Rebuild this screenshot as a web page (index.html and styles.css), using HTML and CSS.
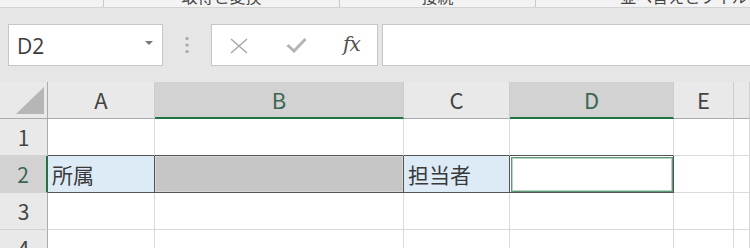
FILE: index.html
```html
<!DOCTYPE html>
<html lang="ja">
<head>
<meta charset="utf-8">
<link rel="stylesheet" href="styles.css">
</head>
<body>
<div class="ribbon">
  <div class="grp g0"></div>
  <div class="grp g1"><span class="glabel">取得と変換</span></div>
  <div class="grp g2"><span class="glabel">接続</span></div>
  <div class="grp g3"><span class="glabel">並べ替えとフィルター</span></div>
</div>
<div class="fbar">
  <div class="namebox"><span class="nb-text">D2</span><span class="nb-arrow"></span></div>
  <div class="grip">
    <svg width="6" height="18" viewBox="0 0 6 18"><circle cx="3" cy="2.5" r="1.6" fill="#a4a4a4"/><circle cx="3" cy="9" r="1.6" fill="#a4a4a4"/><circle cx="3" cy="15.5" r="1.6" fill="#a4a4a4"/></svg>
  </div>
  <div class="btnbox">
    <svg class="ic-x" width="20" height="16" viewBox="0 0 20 16"><path d="M2 1 L18 15 M18 1 L2 15" stroke="#a9a9a9" stroke-width="1.6" fill="none"/></svg>
    <svg class="ic-ok" width="21" height="16" viewBox="0 0 21 16"><path d="M1.5 8 L8 14 L19.5 2" stroke="#b5b5b5" stroke-width="3" fill="none"/></svg>
    <span class="fx">fx</span>
  </div>
  <div class="finput"></div>
</div>
<div class="sheet">
  <div class="h corner"><svg width="48" height="37" viewBox="0 0 48 37"><polygon points="44,5 44,32 16,32" fill="#b6b6b6"/></svg></div>
  <div class="h">A</div>
  <div class="h sel">B</div>
  <div class="h">C</div>
  <div class="h sel">D</div>
  <div class="h">E</div>
  <div class="h last"></div>

  <div class="rh">1</div>
  <div class="c top2"></div>
  <div class="c top2"></div>
  <div class="c top2"></div>
  <div class="c top2"></div>
  <div class="c"></div>
  <div class="c"></div>

  <div class="rh sel">2</div>
  <div class="c r2 blue">所属</div>
  <div class="c r2 gray"></div>
  <div class="c r2 blue">担当者</div>
  <div class="c r2 active"><div class="cursor"></div></div>
  <div class="c"></div>
  <div class="c"></div>

  <div class="rh">3</div>
  <div class="c"></div>
  <div class="c"></div>
  <div class="c"></div>
  <div class="c"></div>
  <div class="c"></div>
  <div class="c"></div>

  <div class="rh">4</div>
  <div class="c"></div>
  <div class="c"></div>
  <div class="c"></div>
  <div class="c"></div>
  <div class="c"></div>
  <div class="c"></div>
</div>
</body>
</html>
```
FILE: styles.css
```css
html, body {
  margin: 0;
  padding: 0;
}
body {
  width: 750px;
  height: 248px;
  overflow: hidden;
  background: #e6e6e6;
  font-family: "Noto Sans CJK JP", "Noto Sans", sans-serif;
}
.ribbon {
  display: flex;
  height: 8px;
  box-sizing: border-box;
  background: #f3f3f3;
  border-bottom: 1px solid #d4d4d4;
  overflow: hidden;
}
.grp {
  flex: none;
  box-sizing: border-box;
  border-right: 1px solid #c9c9c9;
  display: flex;
  justify-content: center;
  white-space: nowrap;
}
.g0 { width: 104px; }
.g1 { width: 236px; }
.g2 { width: 196px; }
.g3 { width: 328px; border-right: none; }
.glabel {
  font-size: 16px;
  line-height: 16px;
  margin-top: -12px;
  color: #444;
}
.fbar {
  display: flex;
  align-items: flex-start;
  height: 74px;
  box-sizing: border-box;
  padding: 16px 0 0 8px;
}
.namebox {
  width: 155px;
  height: 42px;
  box-sizing: border-box;
  background: #fff;
  border: 1px solid #c6c6c6;
  display: flex;
  align-items: center;
  justify-content: space-between;
  padding: 0 9px 0 8px;
}
.nb-text {
  font-family: "Open Sans", "Noto Sans", sans-serif;
  font-size: 21px;
  color: #3a3a3a;
  margin-top: 2px;
}
.nb-arrow {
  width: 0;
  height: 0;
  border-left: 4px solid transparent;
  border-right: 4px solid transparent;
  border-top: 4px solid #777;
  margin-top: -4px;
}
.grip {
  width: 48px;
  display: flex;
  justify-content: center;
  padding-top: 12px;
}
.btnbox {
  width: 167px;
  height: 42px;
  box-sizing: border-box;
  background: #fff;
  border: 1px solid #c6c6c6;
  display: flex;
  align-items: center;
  padding-left: 17px;
}
.ic-x { margin-top: 1px; }
.ic-ok { margin-left: 37px; }
.fx {
  margin-left: 36px;
  font-family: "DejaVu Serif", "Liberation Serif", serif;
  font-style: italic;
  font-weight: normal;
  font-size: 20px;
  color: #505050;
  letter-spacing: -1px;
  margin-top: -3px;
}
.finput {
  margin-left: 4px;
  flex: 1;
  height: 42px;
  box-sizing: border-box;
  background: #fff;
  border: 1px solid #c6c6c6;
  border-right: none;
}
.sheet {
  display: grid;
  grid-template-columns: 48px 107px 249px 106px 164px 60px 1fr;
  grid-template-rows: 37px 37px 37px 37px 37px;
  background: #fff;
}
.h {
  box-sizing: border-box;
  background: #e9e9e9;
  border-right: 1px solid #cdcdcd;
  border-bottom: 1px solid #ababab;
  display: flex;
  align-items: center;
  justify-content: center;
  font-size: 22px;
  color: #444;
  padding-bottom: 2px;
}
.h.corner {
  padding: 0;
  border-right: 1px solid #ababab;
  display: block;
}
.h.corner svg { display: block; }
.h.sel {
  background: #d2d2d2;
  border-bottom: 2px solid #217346;
  color: #3d6652;
}
.rh {
  box-sizing: border-box;
  background: #e9e9e9;
  border-right: 1px solid #ababab;
  border-bottom: 1px solid #d2d2d2;
  display: flex;
  align-items: center;
  justify-content: center;
  font-size: 21px;
  color: #444;
}
.rh.sel {
  background: #d2d2d2;
  border-right: 2px solid #217346;
  color: #3d6652;
}
.c {
  box-sizing: border-box;
  border-right: 1px solid #dadada;
  border-bottom: 1px solid #dadada;
  display: flex;
  align-items: center;
  padding-left: 4px;
  font-size: 21px;
  color: #3a3a3a;
  overflow: hidden;
  white-space: nowrap;
}
.c.top2 { border-bottom-color: #555; }
.c.r2 {
  border-right-color: #555;
  border-bottom-color: #555;
}
.c.blue { background: #ddebf7; }
.c.gray {
  background: #c6c6c6;
  box-shadow: inset 0 0 0 1px #d6d6d6;
}
.c.active {
  padding: 1px 0 0 1px;
  align-items: stretch;
}
.cursor {
  flex: 1;
  box-sizing: border-box;
  border: 1px solid #5f9a76;
  box-shadow: inset 0 0 0 1px #b7d3c1;
}
```
